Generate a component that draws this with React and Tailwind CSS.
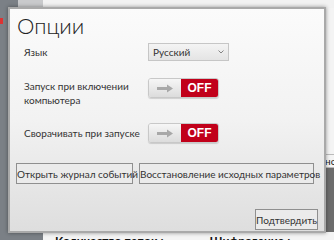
import React from 'react';

const Toggle = () => (
  <div className="flex h-[20px] w-[71px] rounded-[3px] overflow-hidden border border-[#c8c8c8] shadow-[0_1px_1px_rgba(0,0,0,0.15)]">
    <div className="w-[32px] flex items-center justify-center bg-gradient-to-b from-[#f6f6f6] to-[#dcdcdc]">
      <svg width="18" height="9" viewBox="0 0 18 9">
        <path d="M1 3h10V0.5L17 4.5 11 8.5V6H1z" fill="#a8a8a8" />
      </svg>
    </div>
    <div className="flex-1 flex items-center justify-center bg-[#c1001a] text-white text-[12px] font-bold leading-none font-['Liberation_Sans',sans-serif]">
      OFF
    </div>
  </div>
);

const App = () => {
  return (
    <div className="relative w-[334px] h-[240px] overflow-hidden bg-[#7b8086] font-['Lato',sans-serif] text-[#333]">
      {/* dimmed app behind */}
      <div className="absolute left-[18px] top-0 w-[25px] h-[8px] bg-[#c9cacc]" />
      <div className="absolute left-[43px] top-0 right-0 h-[8px] bg-[#f2f2f2]" />
      <div className="absolute left-[43px] top-[232px] right-0 bottom-0 bg-[#f4f4f4] flex text-[12px] font-bold text-[#111] leading-none pt-[3px] whitespace-nowrap">
        <span className="ml-[12px]">Количество папок :</span>
        <span className="ml-[46px]">Шифрование :</span>
      </div>
      <div className="absolute left-0 top-[18px] w-[3px] h-[6px] bg-[#d33]" />
      <div className="absolute left-[325px] top-[8px] right-0 h-[148px] bg-[#f4f4f4]" />
      <div className="absolute left-[325px] top-[154px] right-0 h-[14px] bg-[#f4f4f4] border-y border-[#bbb] text-[10px] leading-[12px] text-[#222] whitespace-nowrap">но</div>
      <div className="absolute left-[325px] top-[168px] right-0 h-[64px] bg-[#6c6c6c]" />

      {/* dialog */}
      <div className="absolute left-[8px] top-[7px] w-[318px] h-[226px] border-2 border-[#a9a9a9] bg-gradient-to-b from-[#fbfbfb] via-[#f2f2f2] to-[#dedede] shadow-[0_0_4px_rgba(0,0,0,0.4)] flex flex-col">
        <div className="pl-[7px] pt-[3px] text-[22px] font-light leading-[28px] text-[#222]">Опции</div>

        <div className="flex items-center mt-[3px] h-[18px] pl-[14px]">
          <span className="w-[124px] text-[10px]">Язык</span>
          <div className="w-[81px] h-[18px] flex items-center justify-between px-[4px] bg-gradient-to-b from-[#f4f4f4] to-[#e4e4e4] border border-[#c6c6c6] text-[10px]">
            <span>Русский</span>
            <svg width="6" height="4" viewBox="0 0 6 4"><path d="M0.5 0.5L3 3 5.5 0.5" fill="none" stroke="#777" strokeWidth="0.9" /></svg>
          </div>
        </div>

        <div className="flex items-start mt-[17px] pl-[14px]">
          <span className="w-[124px] text-[10px] leading-[14px] pt-[1px]">Запуск при включении<br />компьютера</span>
          <Toggle />
        </div>

        <div className="flex items-center mt-[16px] pl-[14px]">
          <span className="w-[124px] text-[10px] whitespace-nowrap">Сворачивать при запуске</span>
          <Toggle />
        </div>

        <div className="flex gap-[6px] mt-[20px] pl-[6px]">
          <button className="h-[21px] w-[117px] border border-[#8f8f8f] bg-[#ebebeb] text-[10px] leading-none text-[#333] whitespace-nowrap">Открыть журнал событий</button>
          <button className="h-[21px] w-[175px] border border-[#8f8f8f] bg-[#ebebeb] text-[10px] leading-none text-[#333] whitespace-nowrap">Восстановление исходных параметров</button>
        </div>

        <div className="flex justify-end mt-[25px] pr-[6px]">
          <button className="h-[21px] w-[63px] border border-[#8f8f8f] bg-[#ebebeb] text-[10px] leading-none text-[#333] whitespace-nowrap">Подтвердить</button>
        </div>
      </div>
    </div>
  );
};

export default App;
